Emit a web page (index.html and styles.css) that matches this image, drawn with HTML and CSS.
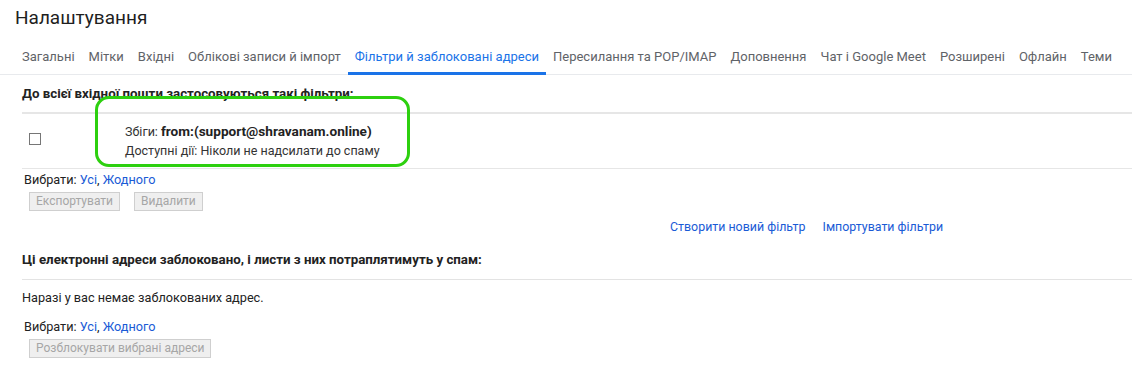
FILE: index.html
```html
<!DOCTYPE html>
<html lang="uk">
<head>
<meta charset="utf-8">
<title>Налаштування</title>
<link rel="stylesheet" href="styles.css">
</head>
<body>
<div class="page">
  <h1 class="title">Налаштування</h1>
  <nav class="tabs">
    <span class="tab">Загальні</span>
    <span class="tab">Мітки</span>
    <span class="tab">Вхідні</span>
    <span class="tab">Облікові записи й імпорт</span>
    <span class="tab active">Фільтри й заблоковані адреси</span>
    <span class="tab">Пересилання та POP/IMAP</span>
    <span class="tab">Доповнення</span>
    <span class="tab">Чат і Google Meet</span>
    <span class="tab">Розширені</span>
    <span class="tab">Офлайн</span>
    <span class="tab">Теми</span>
  </nav>

  <section class="section">
    <div class="section-head thick">До всієї вхідної пошти застосовуються такі фільтри:</div>
    <div class="filter-row">
      <span class="checkbox"></span>
      <div class="filter-text">
        <div>Збіги: <b>from:(support@shravanam.online)</b></div>
        <div>Доступні дії: Ніколи не надсилати до спаму</div>
      </div>
    </div>
    <div class="select">Вибрати: <a class="link">Усі</a>, <a class="link">Жодного</a></div>
    <div class="buttons">
      <span class="btn">Експортувати</span>
      <span class="btn">Видалити</span>
    </div>
    <div class="actions">
      <a class="link">Створити новий фільтр</a>
      <a class="link">Імпортувати фільтри</a>
    </div>
  </section>

  <section class="section second">
    <div class="section-head">Ці електронні адреси заблоковано, і листи з них потраплятимуть у спам:</div>
    <div class="empty">Наразі у вас немає заблокованих адрес.</div>
    <div class="select second-select">Вибрати: <a class="link">Усі</a>, <a class="link">Жодного</a></div>
    <div class="buttons">
      <span class="btn">Розблокувати вибрані адреси</span>
    </div>
  </section>

  <div class="highlight"></div>
</div>
</body>
</html>
```

FILE: styles.css
```css
* { box-sizing: border-box; }
html, body { margin: 0; padding: 0; background: #fff; }
body {
  font-family: Roboto, "Noto Sans", Arial, sans-serif;
  font-size: 12.7px;
  color: #222;
}
.page { position: relative; width: 1132px; height: 386px; overflow: hidden; }

.title {
  margin: 0 0 0 15px;
  padding-top: 6px;
  font-size: 19px;
  line-height: 24px;
  font-weight: 400;
  color: #1f1f1f;
}

.tabs {
  display: flex;
  margin-top: 12px;
  padding-left: 15px;
  border-bottom: 1px solid #e8eaed;
  font-size: 13px;
}
.tab {
  padding: 0 7px;
  line-height: 30px;
  color: #5f6368;
  border-bottom: 3px solid transparent;
  margin-bottom: -1px;
  white-space: nowrap;
}
.tab.active { color: #1a73e8; border-bottom-color: #1a73e8; }

.section { margin-left: 22px; }
.section-head {
  margin-top: 10px;
  line-height: 18px;
  font-size: 13.3px;
  font-weight: 700;
  padding-bottom: 9px;
  border-bottom: 2px solid #e6e6e6;
}
.filter-row {
  display: flex;
  align-items: center;
  height: 55px;
  border-bottom: 1px solid #e6e6e6;
}
.checkbox {
  width: 12px;
  height: 12px;
  border: 1px solid #767676;
  margin-left: 7px;
  margin-top: -5px;
  flex: none;
}
.filter-text {
  margin-left: 84px;
  line-height: 19px;
  font-size: 12.5px;
  color: #333;
}
.filter-text b { color: #222; font-size: 13.6px; line-height: 18px; }

.select { margin-top: 2px; padding-left: 2px; line-height: 18px; }
.link { color: #1a5bd6; text-decoration: none; cursor: pointer; }

.buttons { display: flex; gap: 14px; margin-top: 3px; padding-left: 7px; }
.btn {
  height: 19px;
  line-height: 17px;
  padding: 0 6px;
  font-size: 12px;
  background: #efefef;
  border: 1px solid #cfcfcf;
  color: #a6a6a6;
  white-space: nowrap;
}

.actions {
  display: flex;
  gap: 17px;
  margin-top: 7px;
  padding-left: 648px;
  line-height: 18px;
  font-size: 12.4px;
}

.second .section-head {
  margin-top: 15px;
  padding-bottom: 10px;
  border-bottom: 1px solid #e3e3e3;
}
.empty { margin-top: 9px; line-height: 18px; }
.second-select { margin-top: 11px; }

.highlight {
  position: absolute;
  left: 95px;
  top: 96px;
  width: 315px;
  height: 71px;
  border: 3px solid #2dd00f;
  border-radius: 14px;
  pointer-events: none;
}
```
